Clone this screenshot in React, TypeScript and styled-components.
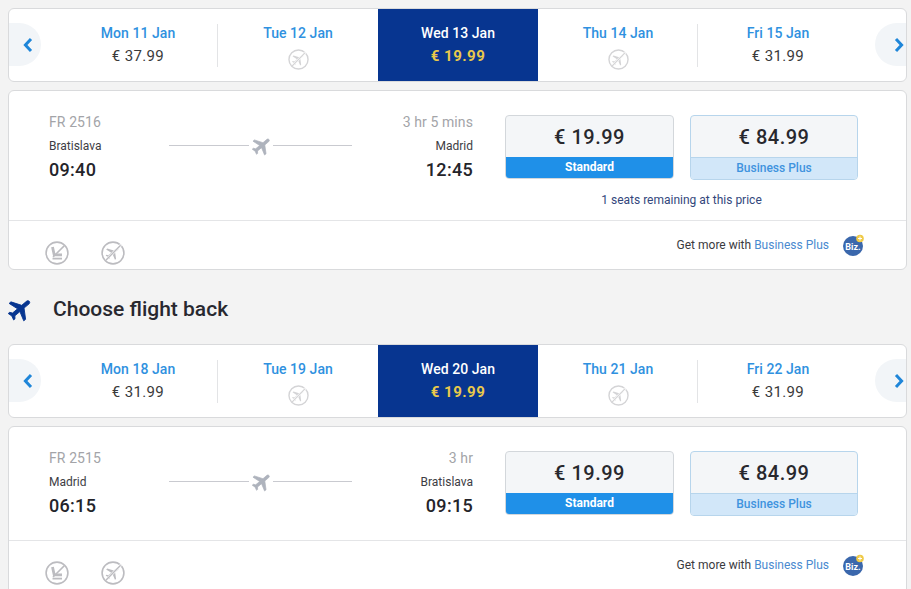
import React from "react";
import styled, { createGlobalStyle } from "styled-components";

const Global = createGlobalStyle`
  html, body { margin: 0; padding: 0; height: 589px; overflow: hidden; background: #f3f3f3; }
  body { font-family: Roboto, "Liberation Sans", sans-serif; color: #2b2b2b; }
`;

const PLANE = "M21 16v-2l-8-5V3.5c0-.83-.67-1.5-1.5-1.5S10 2.67 10 3.5V9l-8 5v2l8-2.5V19l-2 1.5V22l3.5-1 3.5 1v-1.5L13 19v-5.5l8 2.5z";

const Page = styled.div`
  width: 899px;
  height: 589px;
  overflow: hidden;
  padding: 8px 4px 0 8px;
`;

const Card = styled.section`
  background: #fff;
  border: 1px solid #d9dadc;
  border-radius: 6px;
  overflow: hidden;
`;

const DateCard = styled(Card)`
  height: 72px;
  display: flex;
  align-items: stretch;
`;

const NavSlot = styled.div<{ $right?: boolean }>`
  width: ${(p) => (p.$right ? "48px" : "49px")};
  flex: none;
  display: flex;
  align-items: flex-start;
  justify-content: ${(p) => (p.$right ? "flex-end" : "flex-start")};
  padding-top: 14px;
`;

const NavPill = styled.div<{ $right?: boolean }>`
  width: ${(p) => (p.$right ? "31px" : "32px")};
  height: 43px;
  background: #f2f5f8;
  border-radius: ${(p) => (p.$right ? "22px 0 0 22px" : "0 22px 22px 0")};
  display: flex;
  align-items: center;
  justify-content: ${(p) => (p.$right ? "flex-end" : "flex-start")};
  padding: ${(p) => (p.$right ? "0 2px 0 0" : "0 0 0 14px")};
  box-sizing: border-box;
`;

const DateCell = styled.div<{ $selected?: boolean; $divider?: boolean }>`
  width: 160px;
  flex: none;
  box-sizing: border-box;
  position: relative;
  text-align: center;
  padding-top: 16px;
  background: ${(p) => (p.$selected ? "#073590" : "transparent")};
  &::after {
    content: "";
    display: ${(p) => (p.$divider ? "block" : "none")};
    position: absolute;
    right: 0;
    top: 15px;
    height: 43px;
    width: 1px;
    background: #e3e4e6;
  }
`;

const DateLabel = styled.div<{ $selected?: boolean }>`
  font-size: 14px;
  line-height: 17px;
  font-weight: 500;
  letter-spacing: 0.05px;
  color: ${(p) => (p.$selected ? "#fff" : "#2f91e0")};
`;

const DatePrice = styled.div<{ $selected?: boolean }>`
  font-size: 15px;
  line-height: 18px;
  margin-top: 5px;
  letter-spacing: ${(p) => (p.$selected ? "0.5px" : "0.35px")};
  font-weight: ${(p) => (p.$selected ? 700 : 400)};
  color: ${(p) => (p.$selected ? "#e9c94b" : "#3a3a3a")};
`;

const NoFlightSlot = styled.div`
  display: flex;
  justify-content: center;
  margin-top: 7px;
`;

const FlightCard = styled(Card)`
  margin-top: 8px;
  height: 178px;
  display: flex;
  flex-direction: column;
`;

const FlightMain = styled.div<{ $tall?: boolean }>`
  height: ${(p) => (p.$tall ? "130px" : "114px")};
  flex: none;
  display: flex;
  padding: 23px 0 0 40px;
  box-sizing: border-box;
  border-bottom: 1px solid #e4e5e7;
`;

const Endpoint = styled.div<{ $right?: boolean }>`
  width: ${(p) => (p.$right ? "121px" : "120px")};
  flex: none;
  text-align: ${(p) => (p.$right ? "right" : "left")};
`;

const MetaText = styled.div`
  font-size: 14px;
  line-height: 17px;
  color: #a3a4a8;
  letter-spacing: 0.1px;
`;

const CityText = styled.div`
  font-size: 12px;
  line-height: 14px;
  margin-top: 8px;
  color: #3d3d44;
`;

const TimeText = styled.div`
  font-size: 18px;
  line-height: 21px;
  margin-top: 6px;
  font-weight: 500;
  letter-spacing: 0.3px;
  color: #24242a;
`;

const Route = styled.div`
  width: 183px;
  flex: none;
  height: 24px;
  margin-top: 19px;
  display: flex;
  align-items: center;
`;

const RouteLine = styled.div`
  flex: 1;
  height: 1px;
  background: #c9cad0;
`;

const FaresColumn = styled.div`
  margin-left: 32px;
  margin-top: 1px;
  display: flex;
  flex-direction: column;
  width: 353px;
`;

const FareRow = styled.div`
  display: flex;
  align-items: flex-start;
  gap: 16px;
`;

const Fare = styled.div<{ $business?: boolean }>`
  width: ${(p) => (p.$business ? "168px" : "169px")};
  box-sizing: border-box;
  border-radius: 4px;
  border: 1px solid ${(p) => (p.$business ? "#b7d5ec" : "#d3d7db")};
  overflow: hidden;
  background: #f4f6f8;
`;

const FareAmount = styled.div`
  height: 41px;
  font-size: 20px;
  line-height: 42px;
  font-weight: 500;
  letter-spacing: 0.5px;
  color: #28282d;
  text-align: center;
`;

const FareName = styled.div<{ $business?: boolean }>`
  height: 21px;
  line-height: ${(p) => (p.$business ? "20px" : "21px")};
  font-size: 12px;
  font-weight: ${(p) => (p.$business ? 500 : 700)};
  text-align: center;
  background: ${(p) => (p.$business ? "#d2e7f9" : "#1f90e8")};
  color: ${(p) => (p.$business ? "#3f93de" : "#fff")};
  border-top: ${(p) => (p.$business ? "1px solid #b7d5ec" : "none")};
`;

const SeatsNote = styled.div`
  margin-top: 13px;
  text-align: center;
  font-size: 12px;
  line-height: 14px;
  color: #33477c;
`;

const FlightFooter = styled.div`
  flex: 1;
  display: flex;
  align-items: flex-start;
  padding: 20px 40px 0 36px;
`;

const FooterIcons = styled.div`
  display: flex;
  gap: 32px;
`;

const Upsell = styled.div`
  margin-left: auto;
  display: flex;
  align-items: center;
  gap: 13px;
  margin-top: -8px;
  font-size: 12px;
  line-height: 22px;
  color: #3a3a3e;
`;

const UpsellLink = styled.span`
  color: #4a8ad0;
`;

const SectionHeader = styled.header`
  height: 70px;
  padding-top: 4px;
  display: flex;
  align-items: center;
  gap: 20px;
`;

const SectionTitle = styled.h2`
  margin: 0;
  font-size: 21px;
  line-height: 26px;
  font-weight: 500;
  color: #28282f;
`;

const Chevron = ({ right }: { right?: boolean }) => (
  <svg width="10" height="16" viewBox="0 0 10 16">
    <path
      d={right ? "M2 2 L7.6 8 L2 14" : "M8 2 L2.4 8 L8 14"}
      fill="none"
      stroke="#1f86d9"
      strokeWidth="3"
    />
  </svg>
);

const RoutePlane = () => (
  <svg width="24" height="24" viewBox="0 0 24 24">
    <path
      d={PLANE}
      fill="#aeb3bd"
      stroke="#aeb3bd"
      strokeWidth="0.7"
      transform="translate(1 1) rotate(50 12 12) translate(.6 .6) scale(.95)"
    />
  </svg>
);

const BackPlane = () => (
  <svg width="25" height="25" viewBox="0 0 24 24">
    <path
      d={PLANE}
      fill="#073590"
      stroke="#073590"
      strokeWidth="0.7"
      transform="rotate(50 12 12) translate(-1.8 -1.8) scale(1.15)"
    />
  </svg>
);

const NoPlane = ({ size = 21, color = "#d4d4d6" }: { size?: number; color?: string }) => (
  <svg width={size} height={size} viewBox="0 0 24 24">
    <circle cx="12" cy="12" r="10.9" fill="none" stroke={color} strokeWidth="1.6" />
    <path
      d={PLANE}
      fill={color}
      transform="rotate(50 12 12) translate(3.4 3.4) scale(.72)"
    />
    <path d="M20 3.8 L5 19.2" stroke="#fff" strokeWidth="2.6" />
    <path d="M19.6 4.2 L4.6 19.6" stroke={color} strokeWidth="1.4" />
  </svg>
);

const NoSeat = () => (
  <svg width="24" height="24" viewBox="0 0 24 24">
    <circle cx="12" cy="12" r="10.9" fill="none" stroke="#bcbcc0" strokeWidth="1.6" />
    <path d="M7.5 6 L9.2 13.8 H17" fill="none" stroke="#bcbcc0" strokeWidth="2.8" />
    <path d="M7.5 17.6 H17" fill="none" stroke="#bcbcc0" strokeWidth="1.8" />
    <path d="M19.4 4.6 L8 16" stroke="#bcbcc0" strokeWidth="1.5" />
  </svg>
);

const BizBadge = () => (
  <svg width="24" height="24" viewBox="0 0 24 24">
    <circle cx="11" cy="13" r="10" fill="#3a67ac" />
    <text x="11" y="16.5" textAnchor="middle" fontFamily="Roboto, sans-serif" fontSize="9" fontWeight="700" fill="#fff">Biz.</text>
    <circle cx="18" cy="5.5" r="3.8" fill="#efca48" />
    <path d="M16 5.5 H20 M18 3.5 V7.5" stroke="#fff" strokeWidth="1" />
  </svg>
);

type DateItem = { label: string; price?: string };

const DateStrip = ({ dates }: { dates: DateItem[] }) => (
  <DateCard>
    <NavSlot>
      <NavPill>
        <Chevron />
      </NavPill>
    </NavSlot>
    {dates.map((d, i) => {
      const selected = i === 2;
      return (
        <DateCell key={d.label} $selected={selected} $divider={i === 0 || i === 3}>
          <DateLabel $selected={selected}>{d.label}</DateLabel>
          {d.price ? (
            <DatePrice $selected={selected}>{d.price}</DatePrice>
          ) : (
            <NoFlightSlot>
              <NoPlane />
            </NoFlightSlot>
          )}
        </DateCell>
      );
    })}
    <NavSlot $right>
      <NavPill $right>
        <Chevron right />
      </NavPill>
    </NavSlot>
  </DateCard>
);

type Flight = {
  code: string;
  duration: string;
  from: string;
  to: string;
  depart: string;
  arrive: string;
  seats?: string;
};

const FlightPanel = ({ f }: { f: Flight }) => (
  <FlightCard>
    <FlightMain $tall={!!f.seats}>
      <Endpoint>
        <MetaText>{f.code}</MetaText>
        <CityText>{f.from}</CityText>
        <TimeText>{f.depart}</TimeText>
      </Endpoint>
      <Route>
        <RouteLine />
        <RoutePlane />
        <RouteLine />
      </Route>
      <Endpoint $right>
        <MetaText>{f.duration}</MetaText>
        <CityText>{f.to}</CityText>
        <TimeText>{f.arrive}</TimeText>
      </Endpoint>
      <FaresColumn>
        <FareRow>
          <Fare>
            <FareAmount>€ 19.99</FareAmount>
            <FareName>Standard</FareName>
          </Fare>
          <Fare $business>
            <FareAmount>€ 84.99</FareAmount>
            <FareName $business>Business Plus</FareName>
          </Fare>
        </FareRow>
        {f.seats && <SeatsNote>{f.seats}</SeatsNote>}
      </FaresColumn>
    </FlightMain>
    <FlightFooter>
      <FooterIcons>
        <NoSeat />
        <NoPlane size={24} color="#bcbcc0" />
      </FooterIcons>
      <Upsell>
        <span>
          Get more with <UpsellLink>Business Plus</UpsellLink>
        </span>
        <BizBadge />
      </Upsell>
    </FlightFooter>
  </FlightCard>
);

export default function App() {
  return (
    <Page>
      <Global />
      <DateStrip
        dates={[
          { label: "Mon 11 Jan", price: "€ 37.99" },
          { label: "Tue 12 Jan" },
          { label: "Wed 13 Jan", price: "€ 19.99" },
          { label: "Thu 14 Jan" },
          { label: "Fri 15 Jan", price: "€ 31.99" },
        ]}
      />
      <FlightPanel
        f={{
          code: "FR 2516",
          duration: "3 hr 5 mins",
          from: "Bratislava",
          to: "Madrid",
          depart: "09:40",
          arrive: "12:45",
          seats: "1 seats remaining at this price",
        }}
      />
      <SectionHeader>
        <BackPlane />
        <SectionTitle>Choose flight back</SectionTitle>
      </SectionHeader>
      <DateStrip
        dates={[
          { label: "Mon 18 Jan", price: "€ 31.99" },
          { label: "Tue 19 Jan" },
          { label: "Wed 20 Jan", price: "€ 19.99" },
          { label: "Thu 21 Jan" },
          { label: "Fri 22 Jan", price: "€ 31.99" },
        ]}
      />
      <FlightPanel
        f={{
          code: "FR 2515",
          duration: "3 hr",
          from: "Madrid",
          to: "Bratislava",
          depart: "06:15",
          arrive: "09:15",
        }}
      />
    </Page>
  );
}
